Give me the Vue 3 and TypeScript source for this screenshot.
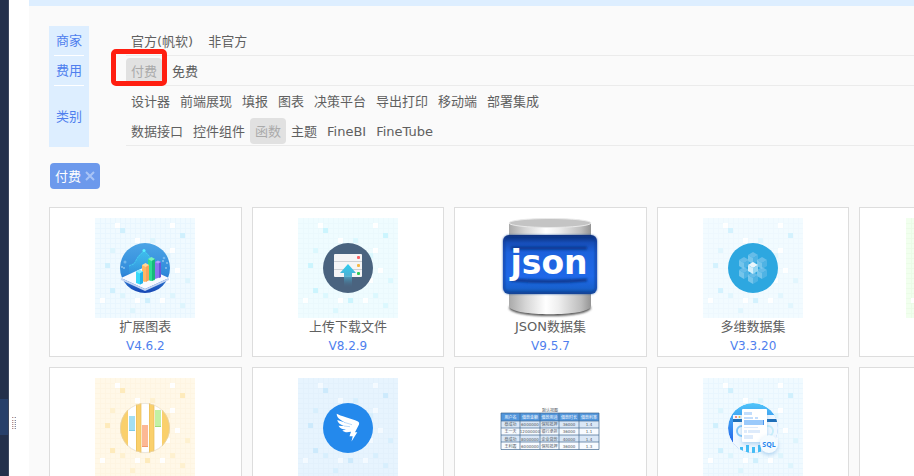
<script setup lang="ts">
import { ref } from 'vue'

type Tone = 'blue' | 'cyan' | 'ice' | 'green' | 'cream' | 'sky' | 'none'
interface Plugin { icon: string; name: string; version: string; tone: Tone }
interface Group { label: string; lines: string[][] }

const groups: Group[] = [
  { label: '商家', lines: [['官方(帆软)', '非官方']] },
  { label: '费用', lines: [['付费', '免费']] },
  {
    label: '类别',
    lines: [
      ['设计器', '前端展现', '填报', '图表', '决策平台', '导出打印', '移动端', '部署集成'],
      ['数据接口', '控件组件', '函数', '主题', 'FineBI', 'FineTube'],
    ],
  },
]

const active = ref<string[]>(['付费', '函数'])
const marked = '付费'
const chips = ref<string[]>(['付费'])

function toggle(name: string) {
  active.value = active.value.includes(name)
    ? active.value.filter((n) => n !== name)
    : [...active.value, name]
}
function removeChip(name: string) {
  chips.value = chips.value.filter((n) => n !== name)
}

const plugins: Plugin[] = [
  { icon: 'chart', name: '扩展图表', version: 'V4.6.2', tone: 'blue' },
  { icon: 'upload', name: '上传下载文件', version: 'V8.2.9', tone: 'cyan' },
  { icon: 'json', name: 'JSON数据集', version: 'V9.5.7', tone: 'none' },
  { icon: 'cubes', name: '多维数据集', version: 'V3.3.20', tone: 'ice' },
  { icon: 'blank', name: '', version: '', tone: 'green' },
  { icon: 'candle', name: '', version: '', tone: 'cream' },
  { icon: 'wing', name: '', version: '', tone: 'sky' },
  { icon: 'table', name: '', version: '', tone: 'none' },
  { icon: 'sql', name: '', version: '', tone: 'blue' },
  { icon: 'empty', name: '', version: '', tone: 'none' },
]

const tones: Record<Tone, { bg: string; line: string; strong: string; soft: string; pale: string }> = {
  blue: { bg: '#f0faff', line: '#e9f6fe', strong: '#d0f0fd', soft: '#def5fd', pale: '#ffffff' },
  cyan: { bg: '#effcff', line: '#ebf9fd', strong: '#ccf5fe', soft: '#dcf8fe', pale: '#ffffff' },
  ice: { bg: '#f2fbff', line: '#eef8fe', strong: '#d4f2fe', soft: '#e2f6fe', pale: '#ffffff' },
  green: { bg: '#f1ffee', line: '#ebfce7', strong: '#d6f8cd', soft: '#e2fbdc', pale: '#ffffff' },
  cream: { bg: '#fff8e8', line: '#fef5e2', strong: '#feebbc', soft: '#fef1d0', pale: '#ffffff' },
  sky: { bg: '#e7f4fe', line: '#e3f1fc', strong: '#cdeafc', soft: '#d8effd', pale: '#f4faff' },
  none: { bg: '#ffffff', line: '#ffffff', strong: '#ffffff', soft: '#ffffff', pale: '#ffffff' },
}

const pale = [[20, 5], [75, 5], [40, 20], [75, 30], [80, 50], [70, 60], [5, 80], [40, 80], [65, 80]]
const strong = [[25, 10], [85, 15], [10, 45], [15, 70], [50, 80]]
const soft = [[55, 20], [15, 30], [70, 35], [90, 60], [25, 75], [75, 75], [85, 85], [35, 90]]
const steps = Array.from({ length: 19 }, (_, i) => (i + 1) * 5)

const cubes = [[50, 40], [41, 45], [59, 45], [41, 55], [59, 55], [50, 60], [50, 50]]
const stars = [[29, 50], [27, 49], [68, 43], [71, 50], [72, 45]]

const sheet = [
  ['用户名', '借款金额', '借款用途', '借款时长', '借款利率'],
  ['蔡成功', '6000000', '保险抵押', '36000', '1.4'],
  ['王一天', '12000000', '银行承担', '36000', '1.1'],
  ['蔡成功', '8000000', '企业贷款', '40000', '1.4'],
  ['王利霞', '6000000', '保险抵押', '36000', '1.3'],
]
const columns = [1, 20, 40, 59, 79, 99]
const mid = (i: number) => (columns[i] + columns[i + 1]) / 2
</script>

<template>
  <div class="page">
    <nav class="rail"><a class="rail-item" href="#plugins" aria-label="插件"></a></nav>
    <div class="gutter">
      <svg class="grip" viewBox="0 0 4 13">
        <g v-for="y in [0, 3, 5, 7, 9, 11]" :key="y">
          <rect x="0" :y="y" width="1" height="1" fill="#b08a8c" />
          <rect x="1" :y="y" width="2" height="1" fill="#e3d5ce" />
          <rect x="3" :y="y" width="1" height="1" fill="#7d8bac" />
        </g>
      </svg>
    </div>

    <main class="main">
      <section class="filters">
        <template v-for="group in groups" :key="group.label">
          <div class="label"><span>{{ group.label }}</span></div>
          <div class="options">
            <div v-for="(line, i) in group.lines" :key="i" class="line" :class="{ spaced: group.lines.length === 1 }">
              <button
                v-for="name in line"
                :key="name"
                type="button"
                class="option"
                :class="{ on: active.includes(name), marked: name === marked }"
                @click="toggle(name)"
              >{{ name }}</button>
            </div>
          </div>
        </template>
      </section>

      <div class="chips">
        <button v-for="chip in chips" :key="chip" type="button" class="chip" @click="removeChip(chip)">
          {{ chip }}
          <svg class="cross" viewBox="0 0 10 10"><path d="M1 1L9 9M9 1L1 9" /></svg>
        </button>
      </div>

      <section id="plugins" class="cards">
        <article v-for="(p, n) in plugins" :key="n" class="card">
          <svg class="art" viewBox="0 0 100 100">
            <g v-if="p.tone !== 'none'">
              <rect width="100" height="100" :fill="tones[p.tone].bg" />
              <g :stroke="tones[p.tone].line" shape-rendering="crispEdges">
                <path v-for="s in steps" :key="s" :d="`M${s} 0V100M0 ${s}H100`" />
              </g>
              <rect v-for="([x, y], i) in pale" :key="'p' + i" :x="x" :y="y" width="5" height="5" :fill="tones[p.tone].pale" />
              <rect v-for="([x, y], i) in strong" :key="'s' + i" :x="x" :y="y" width="5" height="5" :fill="tones[p.tone].strong" />
              <rect v-for="([x, y], i) in soft" :key="'f' + i" :x="x" :y="y" width="5" height="5" :fill="tones[p.tone].soft" />
            </g>

            <g v-if="p.icon === 'chart'">
              <defs>
                <linearGradient id="chartBg" x2="0" y2="1">
                  <stop stop-color="#4ba4e6" /><stop offset=".6" stop-color="#318bdb" /><stop offset="1" stop-color="#1746b4" />
                </linearGradient>
                <linearGradient id="chartGlow" x2="0" y2="1">
                  <stop stop-color="#38d4f4" stop-opacity=".6" /><stop offset="1" stop-color="#38d4f4" stop-opacity="0" />
                </linearGradient>
              </defs>
              <circle cx="50" cy="50" r="25" fill="url(#chartBg)" />
              <path d="M34 47L39 45L43 38L49 32L54 37L58 44V60H34Z" fill="url(#chartGlow)" />
              <path d="M34 48L39 46L43 39L49 33L54 38L57 43" fill="none" stroke="#48cdf0" stroke-width=".8" stroke-dasharray="2 1" />
              <circle cx="49" cy="32.500" r="1.500" fill="#59f0ff" />
              <circle cx="30" cy="44" r="1.500" fill="#71b8ee" /><circle cx="69" cy="40" r="1.300" fill="#71b8ee" />
              <circle v-for="([x, y], i) in stars" :key="i" :cx="x" :cy="y" r=".7" fill="#e3f6ff" />
              <path d="M26 60L50 49L74 60L50 71Z" fill="#f8faff" />
              <path d="M26 60L50 71L74 60V62L50 73L26 62Z" fill="#c5d5f3" />
              <path d="M60 44H66V59L60 61Z" fill="#8a76f0" /><path d="M64 44H66V59L64 60Z" fill="#6b56d8" />
              <path d="M60 44L63 42.500L66 44L63 45.500Z" fill="#b0a1ff" />
              <path d="M53 41H60V62L56 63L53 62Z" fill="#2bde92" /><path d="M57 41H60V61L57 63Z" fill="#18b77b" />
              <path d="M53 41L56.500 39L60 41L56.500 43Z" fill="#77f1ba" />
              <path d="M47 47H54V62L50 64L47 63Z" fill="#ffb764" /><path d="M51 47H54V62L51 64Z" fill="#f8a25c" />
              <path d="M47 47L50.500 45L54 47L50.500 49Z" fill="#ffd99b" />
              <path d="M41 53.500H48V65L45 66.500L41 65Z" fill="#38d9fa" /><path d="M45 53.500H48V65L45 66.500Z" fill="#22b1e8" />
              <path d="M41 53.500L44.500 51.500L48 53.500L44.500 55.500Z" fill="#7ceeff" />
            </g>

            <g v-else-if="p.icon === 'upload'">
              <defs>
                <linearGradient id="arrow" x2="0" y2="1">
                  <stop stop-color="#2fcdf1" /><stop offset=".45" stop-color="#49b4d6" /><stop offset="1" stop-color="#4a637f" stop-opacity="0" />
                </linearGradient>
              </defs>
              <circle cx="50" cy="50" r="25" fill="#4a637f" />
              <rect x="36" y="36" width="28" height="23" rx="1" fill="#f5f5f6" />
              <path d="M36 43.500H64M36 51.500H64" stroke="#cdd0d4" />
              <rect x="59" y="38" width="3" height="3" rx="1" fill="#fa6266" />
              <rect x="59" y="46" width="3" height="3" rx="1" fill="#f6b744" />
              <rect x="59" y="54" width="3" height="3" rx="1" fill="#2dcb57" />
              <path d="M50 46L58 55H54V70H46V55H42Z" fill="url(#arrow)" />
            </g>

            <g v-else-if="p.icon === 'json'">
              <defs>
                <linearGradient id="metal">
                  <stop stop-color="#a9a9a9" /><stop offset=".2" stop-color="#d5d5d5" /><stop offset=".45" stop-color="#ffffff" />
                  <stop offset=".6" stop-color="#efefef" /><stop offset=".88" stop-color="#bdbdbd" /><stop offset="1" stop-color="#949494" />
                </linearGradient>
                <linearGradient id="plate" x2="0" y2="1">
                  <stop stop-color="#082a70" /><stop offset=".13" stop-color="#164db7" /><stop offset=".3" stop-color="#1d62dc" />
                  <stop offset=".7" stop-color="#1f68e8" /><stop offset=".9" stop-color="#1861cf" /><stop offset="1" stop-color="#104a99" />
                </linearGradient>
                <filter id="haze"><feGaussianBlur stdDeviation="1.200" /></filter>
              </defs>
              <ellipse cx="50" cy="90" rx="41" ry="8" fill="#555555" filter="url(#haze)" />
              <path d="M9 5V88C9 99 91 99 91 88V5Z" fill="url(#metal)" />
              <ellipse cx="50" cy="5" rx="41" ry="4.500" fill="#c4c4c4" stroke="#e9e9e9" />
              <rect x="3" y="17" width="94" height="59" rx="6" fill="url(#plate)" />
              <rect x="4" y="18" width="92" height="57" rx="5" fill="none" stroke="#123d94" stroke-width="1.500" filter="url(#haze)" />
              <path d="M11 30L87 30.100M11 62Q50 65 87 62" fill="none" stroke="#0b398d" stroke-width="3" filter="url(#haze)" />
              <text class="json-word" x="49" y="56" text-anchor="middle">json</text>
            </g>

            <g v-else-if="p.icon === 'cubes'">
              <circle cx="50" cy="50" r="25" fill="#2da7e0" />
              <g v-for="([x, y], i) in cubes" :key="i" :transform="`translate(${x} ${y})`" :opacity="i === 6 ? 0.9 : 0.6">
                <path d="M0 -6L5 -3L0 0L-5 -3Z" :fill="i === 6 ? '#ffffff' : '#8ccbee'" />
                <path d="M-5 -3L0 0V6L-5 3Z" :fill="i === 6 ? '#e6f7ff' : '#a5d9f3'" />
                <path d="M5 -3L0 0V6L5 3Z" :fill="i === 6 ? '#a1dcf4' : '#67bce8'" />
              </g>
            </g>

            <g v-else-if="p.icon === 'candle'">
              <defs><clipPath id="disc"><circle cx="50" cy="50" r="25" /></clipPath></defs>
              <g clip-path="url(#disc)">
                <rect x="25" y="25" width="50" height="50" fill="#fad06c" />
                <path d="M33 25H41V75H33ZM46 25H54V75H46ZM59 25H67V75H59Z" fill="#ffffff" />
                <path d="M41.500 25V75M46 25V75M54.500 25V75M59 25V75" stroke="#e8bd59" stroke-width=".7" />
                <circle cx="50" cy="50" r="24.600" fill="none" stroke="#d8d4cc" stroke-width=".6" />
              </g>
              <rect x="34" y="38" width="6" height="15" fill="#a3dff3" /><path d="M34 52.500H40" stroke="#7bcce7" />
              <rect x="47" y="47" width="6" height="22" fill="#fcb895" /><path d="M47 68.500H53" stroke="#f0986f" />
              <rect x="60" y="32" width="6" height="17" fill="#c2f1a4" /><path d="M60 48.500H66" stroke="#9edb78" />
            </g>

            <g v-else-if="p.icon === 'wing'">
              <circle cx="50" cy="50" r="25" fill="#2489ec" />
              <path fill="#ffffff" d="M38.700 35.700C42 38 53 40 60 43.500Q61.800 44.500 61 46.500L57 54.300H59.300L53.500 63.500L54.700 58.300H51.500L53 53.800C49 54.500 46.500 54.500 44.300 52.500L48 51.600C44 51.500 41.500 50 40.500 47.700L46 48C42 46.500 39.500 44.500 39.300 42L47 44.500C42 41.500 38.500 39.500 38.700 35.700Z" />
              <path d="M46 44.300L54 46.700M46 48L52 48.700" stroke="#78b7f3" stroke-width=".5" />
            </g>

            <g v-else-if="p.icon === 'table'" class="mini">
              <text x="50" y="34" text-anchor="middle">默认视图</text>
              <rect x="1" y="35" width="98" height="36.500" fill="#f8fbff" />
              <rect x="1" y="35" width="98" height="8" fill="#5296dc" />
              <rect x="1" y="43" width="98" height="7" fill="#dae7f6" />
              <rect x="1" y="57" width="98" height="7" fill="#dae7f6" />
              <path d="M1 35H99M1 43H99M1 50H99M1 57H99M1 64H99M1 71.500H99M1 35V71.500M20 35V71.500M40 35V71.500M59 35V71.500M79 35V71.500M99 35V71.500" stroke="#41678f" stroke-width=".7" />
              <template v-for="(row, r) in sheet" :key="r">
                <text v-for="(cell, c) in row" :key="c" :x="mid(c)" :y="41 + r * 7.2" text-anchor="middle" :class="{ head: r === 0 }">{{ cell }}</text>
              </template>
            </g>

            <g v-else-if="p.icon === 'sql'">
              <defs>
                <linearGradient id="sqlBg" x2="0" y2="1"><stop stop-color="#50c5f9" /><stop offset=".8" stop-color="#2465e9" /></linearGradient>
                <clipPath id="sqlDisc"><circle cx="50" cy="50" r="25" /></clipPath>
                <filter id="lift" x="-50%" y="-50%" width="200%" height="200%"><feDropShadow dx="0" dy="2" stdDeviation="2" flood-color="#4898dc" flood-opacity=".4" /></filter>
              </defs>
              <g clip-path="url(#sqlDisc)">
                <circle cx="50" cy="50" r="25" fill="url(#sqlBg)" />
                <rect x="30" y="37" width="50" height="40" fill="#f0f8ff" />
                <rect x="30" y="41" width="50" height="3" fill="#1e6eb7" />
                <circle cx="33" cy="39" r="1" fill="#f66b61" /><circle cx="36.500" cy="39" r="1" fill="#f6bd39" />
                <circle cx="39" cy="53" r="5" fill="none" stroke="#85c9fa" stroke-width="2" />
                <circle cx="65" cy="53" r="5" fill="none" stroke="#c8eefa" stroke-width="2" />
                <path d="M37 69H40V75H37ZM43 67H46V75H43ZM49 69H52V75H49ZM55 67H58V75H55Z" fill="#43bdf5" />
              </g>
              <rect x="39" y="31" width="25" height="33" rx="1" fill="#ffffff" filter="url(#lift)" />
              <path d="M41 34H49V37H41ZM41 39H50V41H41ZM52 39H55V41H52Z" fill="#c2ddfc" />
              <rect x="41" y="42" width="20" height="5" fill="#9bcafb" /><rect x="60" y="42" width="1" height="5" fill="#4b96ee" />
              <path d="M41 49H55V50H41ZM41 52H44V55H41ZM45 52H57V55H45ZM41 57H50V61H41Z" fill="#deebfb" />
              <circle cx="66" cy="66" r="9" fill="#f4fbff" filter="url(#lift)" />
              <text class="sql-word" x="66" y="69" text-anchor="middle">SQL</text>
            </g>
          </svg>
          <h2 class="name">{{ p.name }}</h2>
          <p class="version">{{ p.version }}</p>
        </article>
      </section>
    </main>
  </div>
</template>

<style>
body {
  overflow: hidden;
}
</style>

<style scoped>
.page {
  display: flex;
  height: 100vh;
  overflow: hidden;
  background: #ffffff;
  color: #606060;
  font: 13px/19px "DejaVu Sans", "Noto Sans CJK SC", sans-serif;
}
.rail {
  flex: none;
  display: flex;
  flex-direction: column;
  justify-content: flex-end;
  width: 9px;
  padding-bottom: 41px;
  box-sizing: border-box;
  border-right: 1px solid #3a455c;
  background: #23304b;
}
.rail-item {
  height: 36px;
  background: #27406a;
}
.gutter {
  flex: none;
  display: flex;
  align-items: flex-end;
  width: 20px;
  padding: 0 3px 46px;
  box-sizing: border-box;
}
.grip {
  width: 4px;
  height: 13px;
}
.main {
  flex: 1;
  min-width: 0;
  overflow: hidden;
  padding: 20px 0 0 20px;
  border-top: 6px solid #ddeeff;
  background: #fafafa;
}
.filters {
  display: grid;
  grid-template-columns: 40px 1fr;
  column-gap: 37px;
}
.label {
  display: flex;
  padding: 0 5px;
  background: #ddeeff;
  color: #4f7fee;
}
.label span {
  flex: 1;
  display: flex;
  align-items: center;
  justify-content: center;
  border-bottom: 1px solid #ffffff;
}
.label:nth-last-child(2) {
  margin-bottom: -1px;
}
.label:nth-last-child(2) span {
  border-bottom: 0;
}
.options {
  display: flex;
  flex-direction: column;
  gap: 4px;
  padding: 2px 0 1px;
  border-bottom: 1px solid #ebebeb;
}
.line {
  display: flex;
}
.spaced {
  gap: 5px;
}
.option {
  position: relative;
  height: 26px;
  padding: 0 5px;
  border: 0;
  border-radius: 4px;
  background: none;
  color: inherit;
  font: inherit;
  white-space: nowrap;
  cursor: pointer;
}
.option.on {
  background: #e1e1e1;
  color: #aaaaaa;
}
.option.marked::after {
  content: "";
  position: absolute;
  inset: -9px -5px -2px -15px;
  border: 5px solid #ff1e10;
  border-radius: 5px;
}
.chips {
  display: flex;
  padding: 17px 1px 18px;
}
.chip {
  display: flex;
  align-items: center;
  gap: 4px;
  height: 26px;
  padding: 0 5px;
  border: 0;
  border-radius: 4px;
  background: #6c99ec;
  color: #ffffff;
  font: inherit;
  cursor: pointer;
}
.cross {
  width: 10px;
  height: 10px;
  fill: none;
  stroke: #a9c4f6;
  stroke-width: 2;
}
.cards {
  display: grid;
  grid-template-columns: repeat(5, 1fr);
  gap: 10px;
  min-width: 1003px;
}
.card {
  display: flex;
  flex-direction: column;
  align-items: center;
  min-height: 150px;
  padding-top: 10px;
  box-sizing: border-box;
  border: 1px solid #dddddd;
  background: #ffffff;
}
.art {
  width: 100px;
  height: 100px;
}
.name,
.version {
  margin: 0;
  font-size: 13px;
  font-weight: 400;
  line-height: 18px;
}
.version {
  color: #4f7fee;
  font-size: 12px;
  line-height: 20px;
}
.json-word {
  fill: #ffffff;
  font: bold 33px "DejaVu Sans", sans-serif;
}
.sql-word {
  fill: #2886ee;
  font: bold 7px "Open Sans", sans-serif;
}
.mini text {
  fill: #505860;
  font: 4px "DejaVu Sans", "Noto Sans CJK SC", sans-serif;
}
.mini .head {
  fill: #ffffff;
}
</style>
